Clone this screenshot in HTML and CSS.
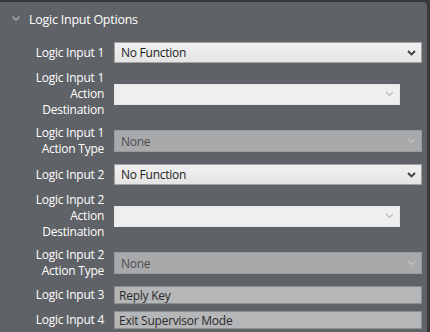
FILE: index.html
```html
<!DOCTYPE html>
<html lang="en">
<head>
    <meta charset="UTF-8">
    <title>Logic Input Options</title>
    <link rel="stylesheet" href="styles.css">
</head>
<body>
    <div class="frame">
        <div class="panel">
            <!-- header -->
            <div class="panel-head">
                <svg class="caret" width="8" height="5" viewBox="0 0 8 5"><path d="M0.5 0.5 L4 4 L7.5 0.5" fill="none" stroke="#a9abad" stroke-width="1.4"/></svg>
                <span>Logic Input Options</span>
            </div>

            <div class="form">
                <div class="row">
                    <div class="label">Logic Input 1</div>
                    <div class="field select">
                        <span>No Function</span>
                        <svg class="arrow" width="9" height="6" viewBox="0 0 9 6"><path d="M1 1 L4.5 4.5 L8 1" fill="none" stroke="#3c3c3c" stroke-width="1.8"/></svg>
                    </div>
                </div>

                <div class="row">
                    <div class="label">Logic Input 1<br>Action<br>Destination</div>
                    <div class="field select empty short">
                        <span></span>
                        <svg class="arrow" width="9" height="6" viewBox="0 0 9 6"><path d="M1 1 L4.5 4.5 L8 1" fill="none" stroke="#b9b9b9" stroke-width="1.2"/></svg>
                    </div>
                </div>

                <div class="row">
                    <div class="label">Logic Input 1<br>Action Type</div>
                    <div class="field select disabled">
                        <span>None</span>
                        <svg class="arrow" width="9" height="6" viewBox="0 0 9 6"><path d="M1 1 L4.5 4.5 L8 1" fill="none" stroke="#c4c4c4" stroke-width="1.2"/></svg>
                    </div>
                </div>

                <div class="row">
                    <div class="label">Logic Input 2</div>
                    <div class="field select">
                        <span>No Function</span>
                        <svg class="arrow" width="9" height="6" viewBox="0 0 9 6"><path d="M1 1 L4.5 4.5 L8 1" fill="none" stroke="#3c3c3c" stroke-width="1.8"/></svg>
                    </div>
                </div>

                <div class="row">
                    <div class="label">Logic Input 2<br>Action<br>Destination</div>
                    <div class="field select empty short">
                        <span></span>
                        <svg class="arrow" width="9" height="6" viewBox="0 0 9 6"><path d="M1 1 L4.5 4.5 L8 1" fill="none" stroke="#b9b9b9" stroke-width="1.2"/></svg>
                    </div>
                </div>

                <div class="row">
                    <div class="label">Logic Input 2<br>Action Type</div>
                    <div class="field select disabled">
                        <span>None</span>
                        <svg class="arrow" width="9" height="6" viewBox="0 0 9 6"><path d="M1 1 L4.5 4.5 L8 1" fill="none" stroke="#c4c4c4" stroke-width="1.2"/></svg>
                    </div>
                </div>

                <div class="row">
                    <div class="label">Logic Input 3</div>
                    <div class="field text">Reply Key</div>
                </div>

                <div class="row">
                    <div class="label">Logic Input 4</div>
                    <div class="field text">Exit Supervisor Mode</div>
                </div>
            </div>
        </div>
    </div>
</body>
</html>
```

FILE: styles.css
```css
*{
    margin: 0;
    padding: 0;
    box-sizing: border-box;
}

body{
    width: 430px;
    height: 332px;
    overflow: hidden;
    background-color: #38393b;
    font-family: "Open Sans", "Noto Sans", sans-serif;
    letter-spacing: -0.25px;
}

/* outer frame: dark strip on top and right */
.frame{
    padding: 2px 3px 0 0;
    height: 100%;
}

.panel{
    height: 100%;
    background-color: #5f6266;
    border-top-right-radius: 4px;
}

.panel-head{
    height: 40px;
    display: flex;
    align-items: flex-start;
    padding: 9px 0 0 12px;
    color: #fff;
    font-size: 12.5px;
}

.panel-head .caret{
    margin: 5px 9px 0 0;
}

.form{
    display: flex;
    flex-direction: column;
    gap: 7px;
}

.row{
    display: grid;
    grid-template-columns: 104px 1fr;
    column-gap: 10px;
    align-items: center;
    padding-right: 5px;
}

.label{
    color: #fff;
    font-size: 12px;
    line-height: 16px;
    text-align: right;
}

.field{
    height: 21px;
    display: flex;
    align-items: center;
    padding-left: 6px;
    font-size: 12px;
    color: #1b1b1b;
}

.select{
    justify-content: space-between;
    padding-right: 5px;
    border: 1px solid #a3a3a3;
    background: linear-gradient(#f1f1f1, #e4e4e4);
}

.select.empty{
    border-color: #e6e6e6;
    background: #efefef;
}

.select.short{
    margin-right: 22px;
}

.select.disabled{
    height: 22px;
    border-color: #9a9b9c;
    background: #a8a9aa;
    color: #4e4e4e;
}

.text{
    height: 18px;
    padding-left: 4px;
    border: 1px solid #8c8d8f;
    background: #b5b6b8;
    color: #2a2a2a;
}
```
